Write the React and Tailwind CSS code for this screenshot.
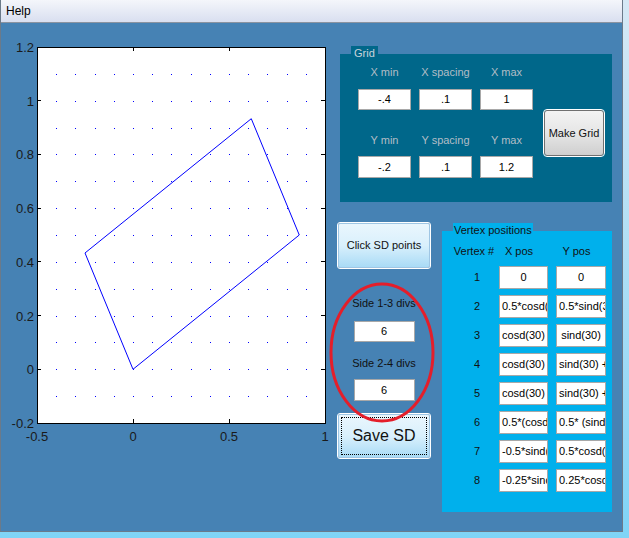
import React from "react";

const font = { fontFamily: '"Liberation Sans", Arial, sans-serif' };

// axes mapping (page pixels)
const X = (x) => 36 + (x + 0.5) * 192;
const Y = (y) => 423 - (y + 0.2) * (376 / 1.4);

const vertices = [
  ["0", "0", true],
  ["0.5*cosd(30)", "0.5*sind(30)"],
  ["cosd(30)", "sind(30)", true],
  ["cosd(30) - 0.5*sind(30)", "sind(30) + 0.5*cosd(30)"],
  ["cosd(30)", "sind(30) + 0.25"],
  ["0.5*(cosd(30))", "0.5* (sind(30))"],
  ["-0.5*sind(30)", "0.5*cosd(30)"],
  ["-0.25*sind(30)", "0.25*cosd(30)"],
];

const Plot = () => {
  const dots = [];
  for (let i = -4; i <= 10; i++) {
    for (let j = -2; j <= 12; j++) {
      dots.push(
        <rect
          key={`${i}_${j}`}
          x={Math.round(X(i / 10))}
          y={Math.round(Y(j / 10))}
          width="1"
          height="1"
          fill="#0000ff"
        />
      );
    }
  }
  const xt = [-0.5, 0, 0.5, 1];
  const yt = [-0.2, 0, 0.2, 0.4, 0.6, 0.8, 1, 1.2];
  const c = Math.cos(Math.PI / 6);
  const s = Math.sin(Math.PI / 6);
  const pts = [
    [0, 0],
    [c, s],
    [c - 0.5 * s, s + 0.5 * c],
    [-0.5 * s, 0.5 * c],
  ]
    .map(([a, b]) => `${X(a)},${Y(b)}`)
    .join(" ");

  return (
    <svg className="w-[337px] h-[508px] shrink-0" viewBox="0 23 337 508" style={font}>
      <rect x="36" y="47" width="288" height="376" fill="#ffffff" />
      <g shapeRendering="crispEdges">{dots}</g>
      <polygon points={pts} fill="none" stroke="#0000ff" strokeWidth="1" />
      <g shapeRendering="crispEdges">
        <rect x="36" y="47" width="288" height="376" fill="none" stroke="#000" strokeWidth="1" />
        {xt.map((v) => (
          <g key={v}>
            <line x1={X(v)} x2={X(v)} y1="423" y2="419" stroke="#000" />
            <line x1={X(v)} x2={X(v)} y1="47" y2="51" stroke="#000" />
          </g>
        ))}
        {yt.map((v) => (
          <g key={v}>
            <line x1="36" x2="40" y1={Y(v)} y2={Y(v)} stroke="#000" />
            <line x1="324" x2="320" y1={Y(v)} y2={Y(v)} stroke="#000" />
          </g>
        ))}
      </g>
      {xt.map((v) => (
        <text key={v} x={X(v)} y="441" fontSize="13" textAnchor="middle" fill="#1a1a1a">
          {v}
        </text>
      ))}
      {yt.map((v) => (
        <text key={v} x="33" y={Y(v) + 5} fontSize="13" textAnchor="end" fill="#1a1a1a">
          {v}
        </text>
      ))}
    </svg>
  );
};

const Edit = ({ children, className = "", left }) => (
  <div
    className={`bg-white border border-[#a8a8a8] text-[11px] text-black whitespace-nowrap overflow-hidden flex items-center ${
      left ? "pl-[2px]" : "justify-center"
    } ${className}`}
  >
    {children}
  </div>
);

const GridPanel = () => (
  <div className="relative mt-[31px] ml-[2px] w-[272px] h-[148px] bg-[#00678a] flex">
    <span className="absolute left-[11px] top-[-8px] px-[3px] bg-[#00678a] text-[11px] leading-[14px] text-[#c9d3db]">
      Grid
    </span>
    <div className="pl-[18px] pt-[11px] flex flex-col">
      <div className="flex gap-2 text-[11px] leading-[14px] text-[#b3bdc6] text-center">
        <span className="w-[53px]">X min</span>
        <span className="w-[53px]">X spacing</span>
        <span className="w-[53px]">X max</span>
      </div>
      <div className="flex gap-2 mt-[10px]">
        <Edit className="w-[53px] h-[21px]">-.4</Edit>
        <Edit className="w-[53px] h-[21px]">.1</Edit>
        <Edit className="w-[53px] h-[21px]">1</Edit>
      </div>
      <div className="flex gap-2 mt-[23px] text-[11px] leading-[14px] text-[#b3bdc6] text-center">
        <span className="w-[53px]">Y min</span>
        <span className="w-[53px]">Y spacing</span>
        <span className="w-[53px]">Y max</span>
      </div>
      <div className="flex gap-2 mt-[9px]">
        <Edit className="w-[53px] h-[22px]">-.2</Edit>
        <Edit className="w-[53px] h-[22px]">.1</Edit>
        <Edit className="w-[53px] h-[22px]">1.2</Edit>
      </div>
    </div>
    <button className="ml-[11px] mt-[56px] w-[60px] h-[46px] rounded-[3px] border border-[#707070] outline outline-1 outline-white bg-gradient-to-b from-[#f3f3f3] via-[#e6e6e6] to-[#cfcfcf] text-[11px] text-[#111]">
      Make Grid
    </button>
  </div>
);

const VertexPanel = () => (
  <div className="relative ml-[12px] mt-[8px] w-[170px] h-[281px] bg-[#00b0ec] pt-[13px]">
    <span className="absolute left-[11px] top-[-8px] px-[1px] bg-[#00b0ec] text-[11px] leading-[14px] text-[#111]">
      Vertex positions
    </span>
    <div className="flex text-[11px] leading-[14px] text-[#111]">
      <span className="w-[57px] pl-[7px] text-center">Vertex #</span>
      <span className="w-[49px] pr-[9px] text-center">X pos</span>
      <span className="w-[58px] pl-[8px] pr-[9px] text-center">Y pos</span>
    </div>
    <div className="mt-[8px] flex flex-col gap-[6px]">
      {vertices.map(([xv, yv, center], i) => (
        <div key={i} className="flex h-[23px] items-center">
          <span className="w-[57px] pl-[13px] text-center text-[11px] text-[#111]">{i + 1}</span>
          <Edit className="w-[49px] h-[23px]" left={!center}>
            {xv}
          </Edit>
          <Edit className="w-[50px] h-[23px] ml-[8px]" left={!center}>
            {yv}
          </Edit>
        </div>
      ))}
    </div>
  </div>
);

const SideColumn = () => (
  <div className="w-[92px] flex flex-col items-center">
    <button className="w-[92px] h-[45px] rounded-[2px] border border-[#9fc6e4] outline outline-1 outline-white bg-gradient-to-b from-[#eaf6fd] via-[#d9f0fc] to-[#a9dbf6] text-[11px] text-[#111]">
      Click SD points
    </button>
    <span className="mt-[28px] text-[11px] leading-[14px] text-[#111]">Side 1-3 divs</span>
    <Edit className="mt-[11px] w-[61px] h-[21px]">6</Edit>
    <span className="mt-[14px] text-[11px] leading-[14px] text-[#111]">Side 2-4 divs</span>
    <Edit className="mt-[9px] w-[61px] h-[22px]">6</Edit>
    <button className="mt-[13px] w-[92px] h-[44px] p-[2px] rounded-[2px] border border-[#9fc6e4] outline outline-1 outline-white bg-gradient-to-b from-[#eaf6fd] via-[#d9f0fc] to-[#a9dbf6]">
      <span className="w-full h-full flex items-center justify-center border border-dotted border-black text-[16px] text-[#111]">
        Save SD
      </span>
    </button>
  </div>
);

export default function App() {
  return (
    <div className="relative w-[629px] h-[538px] bg-gradient-to-b from-[#d6e8f5] to-[#7fd4f6] overflow-hidden" style={font}>
      <div className="w-[623px] h-[532px] bg-[#4682b4] border-l border-r border-b border-[#6b7a8a] flex flex-col">
        <div className="h-[23px] shrink-0 border-b border-[#8a93a0] bg-gradient-to-b from-[#f4f6fb] to-[#d9dff0] flex items-center pl-[5px] text-[12px] text-black">
          Help
        </div>
        <div className="flex h-[508px]">
          <Plot />
          <div className="flex flex-col">
            <GridPanel />
            <div className="flex mt-[21px]">
              <SideColumn />
              <VertexPanel />
            </div>
          </div>
        </div>
      </div>
      <svg className="absolute inset-0 pointer-events-none" width="629" height="538">
        <ellipse cx="382" cy="352.5" rx="51" ry="68.5" fill="none" stroke="#e41e2a" strokeWidth="3" />
      </svg>
    </div>
  );
}
